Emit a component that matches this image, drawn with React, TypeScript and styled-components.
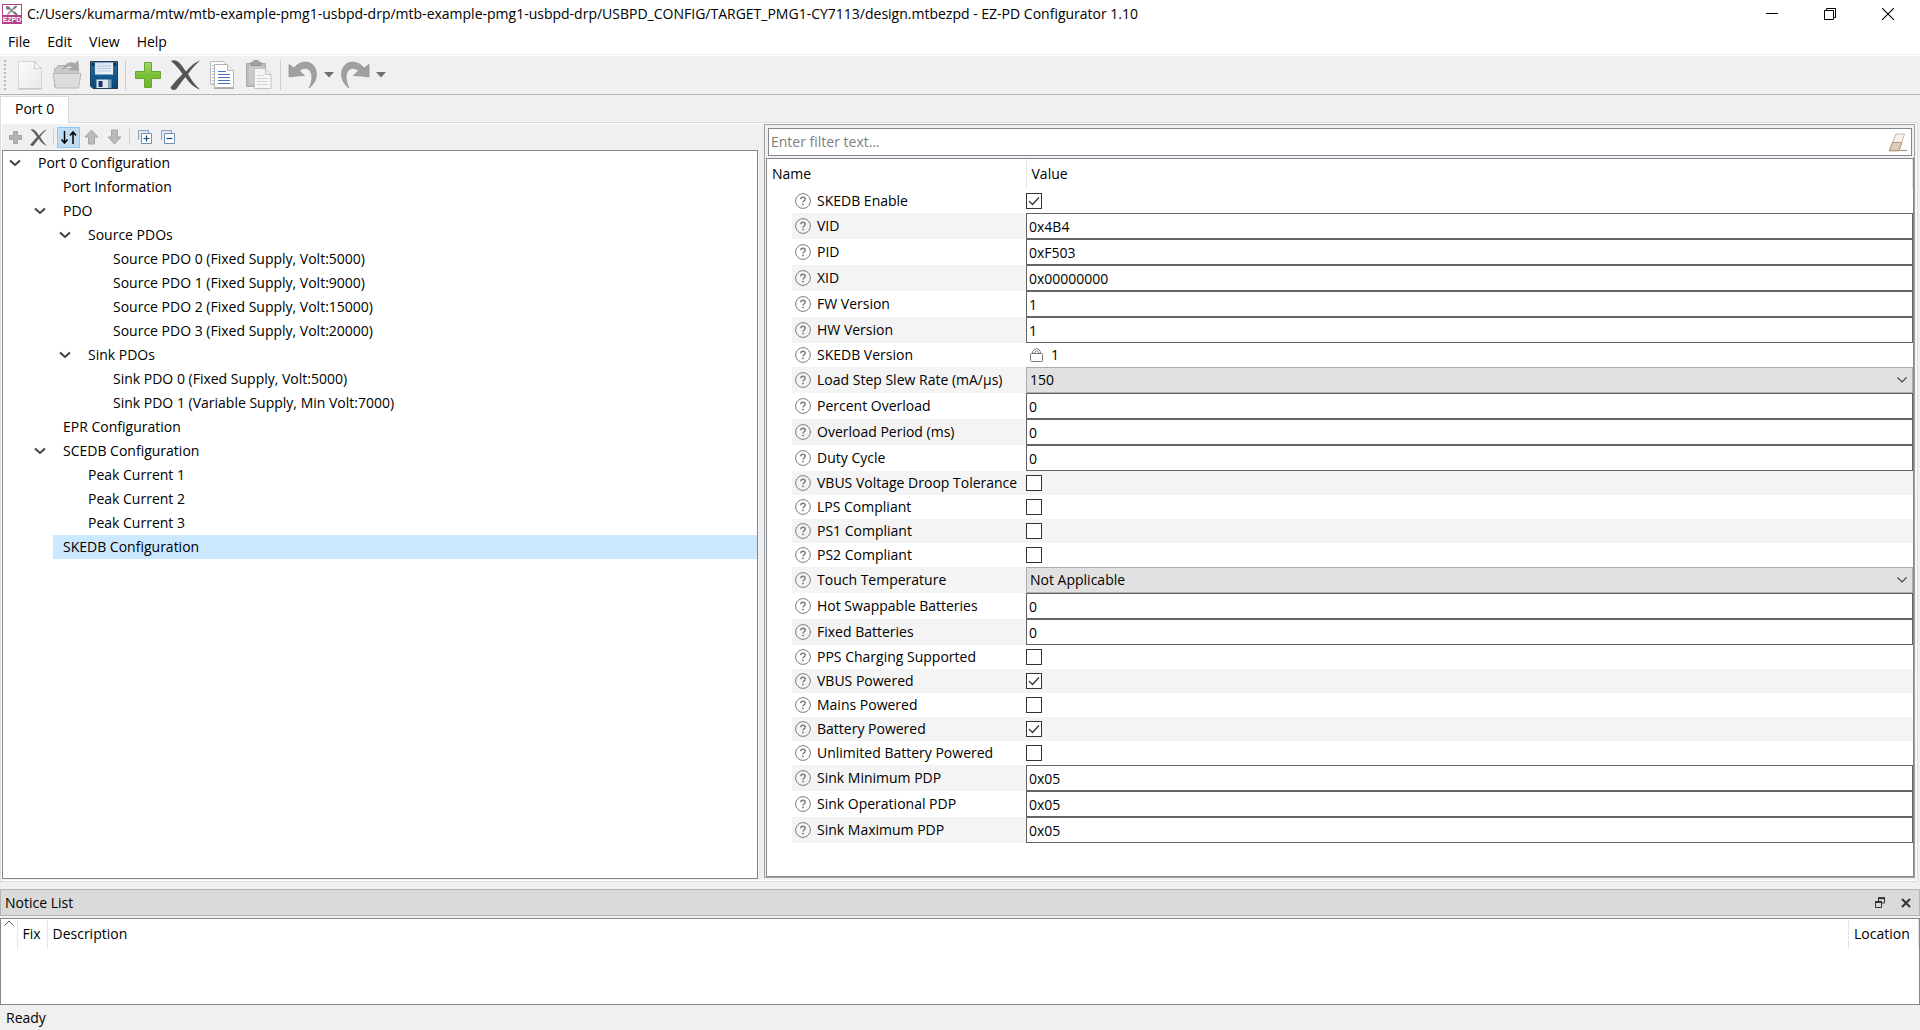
import React, { useState } from "react";
import styled, { createGlobalStyle, css } from "styled-components";

const GlobalStyle = createGlobalStyle`
  *, *::before, *::after { box-sizing: border-box; }
  body { margin: 0; background: #f0f0f0; }
  body, button, input, select {
    font-family: "Open Sans", "Noto Sans", "Liberation Sans", sans-serif;
    font-size: 14px;
    line-height: 20px;
    color: #000;
  }
  button { background: none; border: 0; padding: 0; }
  ul { list-style: none; margin: 0; padding: 0; }
  h1, h2 { font-size: 14px; font-weight: 400; margin: 0; }
`;

const colors = {
  face: "#f0f0f0",
  frame: "#828790",
  light: "#dcdcdc",
  mid: "#b4b4b4",
  field: "#646464",
  stripe: "#f4f4f4",
};

/* ---------- window ---------- */

const Window = styled.div`
  display: flex;
  flex-direction: column;
  min-height: 100vh;
  background: ${colors.face};
`;

const TitleBar = styled.header`
  display: flex;
  align-items: center;
  height: 28px;
  padding-left: 2px;
  background: #fff;
`;

const Title = styled.h1`
  flex: 1;
  margin-left: 5px;
  white-space: nowrap;
`;

const WindowButton = styled.button`
  display: flex;
  align-items: center;
  justify-content: center;
  width: 58px;
  height: 28px;
`;

const WindowButtons = styled.div`
  display: flex;
  padding-right: 3px;
`;

const MenuBar = styled.nav`
  display: flex;
  height: 28px;
  background: #fff;
  border-bottom: 1px solid #fff;
  box-shadow: inset 0 -1px 0 ${colors.face};
  padding-left: 8px;
  gap: 17px;
`;

const MenuButton = styled.button`
  height: 28px;
`;

/* ---------- tool bars ---------- */

const ToolBar = styled.div`
  display: flex;
  align-items: center;
  height: 39px;
  border-bottom: 1px solid ${colors.mid};
`;

const Grip = styled.span`
  width: 2px;
  height: 30px;
  margin: 0 5px 0 4px;
  background: repeating-linear-gradient(#b8b8b8 0 2px, transparent 2px 4px);
`;

const ToolButton = styled.button<{ $width?: number }>`
  display: flex;
  align-items: center;
  justify-content: center;
  width: ${(p) => p.$width ?? 37}px;
  height: 36px;
`;

const Divider = styled.span<{ $height: number }>`
  width: 1px;
  height: ${(p) => p.$height}px;
  margin: 0 3px;
  background: #cfcfcf;
`;

const PaneTools = styled.div`
  display: flex;
  align-items: center;
  height: 26px;
  padding-left: 2px;
`;

const PaneButton = styled.button<{ $on?: boolean }>`
  display: flex;
  align-items: center;
  justify-content: center;
  width: 23px;
  height: 21px;
  ${(p) =>
    p.$on &&
    css`
      background: #c0dcf3;
      border: 1px solid #90c8f6;
    `}
`;

/* ---------- tabs and panes ---------- */

const TabStrip = styled.div`
  display: flex;
  align-items: flex-end;
  height: 27px;
`;

const Tab = styled.button`
  height: 27px;
  margin-bottom: -1px;
  padding: 0 14px 2px;
  background: #fff;
  border: 1px solid ${colors.light};
  border-bottom: 0;
  z-index: 1;
`;

const TabPage = styled.main`
  flex: 1;
  display: grid;
  grid-template-columns: 757fr 1151fr;
  gap: 6px;
  margin-right: 2px;
  padding: 0 2px 0 0;
  border: 1px solid ${colors.light};
  outline: 1px solid #fff;
  outline-offset: -2px;
`;

const LeftPane = styled.section`
  display: flex;
  flex-direction: column;
  padding: 1px 0 2px 1px;
`;

const Tree = styled.ul`
  flex: 1;
  background: #fff;
  border: 1px solid ${colors.frame};
`;

const TreeRow = styled.li<{ $depth: number }>`
  display: flex;
  height: 24px;
  padding-left: ${(p) => p.$depth * 25}px;
`;

const TreeToggle = styled.button`
  display: flex;
  align-items: center;
  justify-content: center;
  width: 25px;
  padding-right: 2px;
`;

const TreeIndent = styled.span`
  width: 25px;
`;

const TreeLabel = styled.button<{ $selected: boolean }>`
  flex: 1;
  padding: 0 10px;
  text-align: left;
  background: ${(p) => (p.$selected ? "#cce8ff" : "transparent")};
`;

const RightPane = styled.section`
  display: flex;
  flex-direction: column;
  margin: 1px 0 3px;
  padding: 3px 0 0 1px;
  border: 1px solid #a0a0a0;
`;

const FilterBox = styled.div`
  display: flex;
  align-items: center;
  height: 28px;
  margin: 0 2px 2px;
  background: #fff;
  border: 1px solid ${colors.frame};
`;

const FilterInput = styled.input`
  flex: 1;
  border: 0;
  padding: 0 2px;
  background: transparent;
  outline: 0;
  &::placeholder {
    color: #808080;
    opacity: 1;
  }
`;

const ClearButton = styled.button`
  display: flex;
  width: 28px;
  justify-content: center;
`;

const Sheet = styled.div`
  flex: 1;
  background: #fff;
  border: 1px solid ${colors.frame};
`;

/* ---------- parameter table ---------- */

const Params = styled.table`
  width: 100%;
  table-layout: fixed;
  border-collapse: collapse;
`;

const HeadCell = styled.th`
  height: 30px;
  padding: 0 5px;
  font-weight: 400;
  text-align: left;
  border-right: 1px solid #e5e5e5;
`;

const ParamRow = styled.tr<{ $tall: boolean }>`
  height: ${(p) => (p.$tall ? 26 : 24)}px;
  &:nth-child(even) > :not(:first-child) {
    background: ${colors.stripe};
  }
`;

const Cell = styled.td`
  padding: 0;
`;

const NameCell = styled.th`
  padding: 0;
  font-weight: 400;
  text-align: left;
`;

const NameLabel = styled.label`
  display: flex;
  align-items: center;
  gap: 6px;
  padding-left: 3px;
  white-space: nowrap;
  > svg {
    flex: none;
  }
`;

const TextField = styled.input`
  display: block;
  width: 100%;
  height: 26px;
  padding: 0 2px;
  border: 1px solid ${colors.field};
  border-radius: 0;
  background: #fff;
`;

const Overlay = styled.span`
  display: grid;
  align-items: center;
  > * {
    grid-area: 1 / 1;
  }
  > svg {
    pointer-events: none;
  }
`;

const SelectField = styled.select`
  appearance: none;
  width: 100%;
  height: 26px;
  padding: 0 3px;
  border: 1px solid #adadad;
  border-radius: 0;
  background: #e1e1e1;
`;

const SelectArrow = styled.svg`
  justify-self: end;
  margin-right: 6px;
`;

const CheckField = styled.input`
  appearance: none;
  width: 16px;
  height: 16px;
  margin: 0;
  border: 1px solid #333;
  background: #fff;
  & + svg {
    visibility: hidden;
  }
  &:checked + svg {
    visibility: visible;
  }
`;

const LockedValue = styled.output`
  display: flex;
  align-items: center;
  gap: 8px;
  padding-left: 4px;
`;

/* ---------- notices ---------- */

const NoticeTitle = styled.div`
  display: flex;
  align-items: center;
  height: 27px;
  margin: 7px 0 2px;
  padding: 0 0 0 4px;
  background: #dadada;
  border: 1px solid ${colors.mid};
  h2 {
    flex: 1;
  }
`;

const DockButton = styled.button`
  display: flex;
  align-items: center;
  justify-content: center;
  width: 26px;
  height: 20px;
`;

const NoticeBox = styled.div`
  height: 87px;
  background: #fff;
  border: 1px solid ${colors.frame};
`;

const NoticeTable = styled.table`
  width: 100%;
  table-layout: fixed;
  border-collapse: collapse;
`;

const SortCell = styled(HeadCell)`
  padding: 1px 0 0 3px;
  vertical-align: top;
  line-height: 0;
`;

const StatusBar = styled.footer`
  height: 25px;
  padding: 3px 6px 2px;
`;

/* ---------- icons ---------- */

const AppIcon = () => (
  <svg width="20" height="20" viewBox="0 0 20 20">
    <rect x="0.5" y="0.5" width="19" height="19" fill="#fff" stroke="#b5408c" />
    <rect x="1" y="11" width="18" height="8" fill="#b5408c" />
    <path d="M6 2.5l7 7.5M13.5 2.5l-8 8" stroke="#8a8a8a" strokeWidth="1.6" />
    <path d="M5 2v2.5h3M12 4.500l2.500-2.500M12 8l3 3" stroke="#777" strokeWidth="1.800" fill="none" />
    <text x="10" y="18" fontSize="7" fontWeight="700" fill="#fff" textAnchor="middle" fontFamily="Liberation Sans, sans-serif">
      EZPD
    </text>
  </svg>
);

const MinimizeIcon = () => (
  <svg width="12" height="12" viewBox="0 0 12 12"><path d="M0 5.5h12" stroke="#000" /></svg>
);
const RestoreIcon = () => (
  <svg width="12" height="12" viewBox="0 0 12 12" fill="none" stroke="#000">
    <path d="M.5 2.500h9v9h-9zM2.500 2.500v-2h9v9h-2" />
  </svg>
);
const CloseIcon = () => (
  <svg width="12" height="12" viewBox="0 0 12 12"><path d="M0 0l12 12M12 0L0 12" stroke="#000" strokeWidth="1.100" /></svg>
);

const NewIcon = () => (
  <svg width="26" height="30" viewBox="0 0 26 30">
    <defs>
      <linearGradient id="paper" x1="0" y1="0" x2="1" y2="1"><stop offset="0" stopColor="#fcfcfc" /><stop offset="1" stopColor="#e9e9e9" /></linearGradient>
    </defs>
    <path d="M1.500 1.500h16l7 7v20h-23z" fill="url(#paper)" stroke="#d6d6d6" />
    <path d="M17.500 1.500c1 2 .5 5-.5 7.500 3-1 5.500-1 7.500-.5z" fill="#fafafa" stroke="#c8c8c8" />
    <path d="M1 29h24" stroke="#bbb" />
  </svg>
);
const OpenIcon = () => (
  <svg width="30" height="30" viewBox="0 0 30 30">
    <path d="M2.500 27V8.500h2l1.500-3h7l1.500 3h12V15" fill="#c9c9c9" stroke="#b0b0b0" />
    <path d="M1 13.500h28l-2.500 14.500h-23z" fill="#dcdcdc" stroke="#b8b8b8" />
    <path d="M11 9.500c1-5 6-8.500 12-6l3-2.500.5 9h-9l3-3c-4-1.500-7-.5-9.500 2.500z" fill="#a9a9a9" stroke="#999" strokeWidth=".6" />
  </svg>
);
const SaveIcon = () => (
  <svg width="28" height="28" viewBox="0 0 28 28">
    <defs>
      <linearGradient id="disk" x1="0" y1="0" x2="0" y2="1"><stop offset="0" stopColor="#3a6d93" /><stop offset=".5" stopColor="#155a90" /><stop offset="1" stopColor="#0d4573" /></linearGradient>
      <linearGradient id="plate" x1="0" y1="0" x2="1" y2="1"><stop offset="0" stopColor="#cddff0" /><stop offset="1" stopColor="#f3f7fa" /></linearGradient>
    </defs>
    <path d="M.5.5h27v27H3L.5 25z" fill="url(#disk)" stroke="#1d3e5a" />
    <path d="M5 1.500h18v12H5z" fill="url(#plate)" />
    <path d="M7 5h14M7 7.500h14M7 10h14" stroke="#b9cad9" />
    <path d="M2 2h2v3H2zM24 2h2v3h-2z" fill="#0b2c49" />
    <path d="M6.500 18.500h12V27h-12z" fill="#e4e8ec" />
    <path d="M8.500 20h4v6h-4z" fill="#1c2f6d" />
    <path d="M18.500 18.500h3V27h-3z" fill="#7fa3c0" />
  </svg>
);
const PlusIcon = () => (
  <svg width="28" height="28" viewBox="0 0 28 28">
    <defs>
      <linearGradient id="green" x1="0" y1="0" x2="0" y2="1"><stop offset="0" stopColor="#a5d66a" /><stop offset=".5" stopColor="#7cc035" /><stop offset="1" stopColor="#6fb62c" /></linearGradient>
    </defs>
    <path d="M10.500 1.500h7v9h9v7h-9v9h-7v-9h-9v-7h9z" fill="url(#green)" stroke="#65a82f" strokeLinejoin="round" />
  </svg>
);
const Cross = ({ size, color }: { size: number; color: string }) => (
  <svg width={size} height={size} viewBox="0 0 30 30">
    <path d="M1 1C4-.5 7 .5 9.500 3c3 3 4.500 6 6.500 8.500C19.500 7.500 23.500 3 30 .5c-4 4-8.500 8-12 13.500C21 19.500 25 25 30 29.500c-6-2-11-6.500-14.500-12.500C12 21 9 25.500 6 29.500c-2 1-5 .5-5.500-2C4 23 8.500 18 12.500 14 9.500 9.500 5.500 4.500 1 1z" fill={color} />
  </svg>
);
const CopyIcon = () => (
  <svg width="26" height="30" viewBox="0 0 26 30">
    <path d="M1.500 1.500h13l4 4v19h-17z" fill="#fafafa" stroke="#bcbcbc" />
    <path d="M4 5v19" stroke="#5f7fd0" strokeDasharray="1 2" />
    <path d="M5.500 4.500h13l6 6v17h-19z" fill="#fff" stroke="#b4b4b4" />
    <path d="M18.500 4.500v6h6" fill="#f2f2f2" stroke="#b4b4b4" />
    <path d="M5 28.500h20" stroke="#a8a8a8" />
    <path d="M9 11.500h8M9 14.500h12M9 17.500h12M9 20.500h12M9 23.500h12" stroke="#4a6fd0" />
  </svg>
);
const PasteIcon = () => (
  <svg width="28" height="30" viewBox="0 0 28 30">
    <path d="M1.500 3.500h19v23h-19z" fill="#bdbdbd" stroke="#a9a9a9" />
    <path d="M4 6h14v18H4z" fill="#c9c9c9" />
    <path d="M6 5.500V2.500h2.500V.8h5v1.700H16v3z" fill="#a4a4a4" stroke="#8f8f8f" />
    <path d="M9.500 8.500h11l5.500 6v14H9.500z" fill="#f6f6f6" stroke="#c2c2c2" />
    <path d="M20.500 8.500v6H26" fill="#e9e9e9" stroke="#c2c2c2" />
    <path d="M12 15.500h7M12 18.500h11M12 21.500h11M12 24.500h11" stroke="#d6d6d6" />
  </svg>
);
const UndoIcon = ({ flip }: { flip?: boolean }) => (
  <svg width="30" height="28" viewBox="0 0 30 28">
    <path
      transform={flip ? "translate(30 0) scale(-1 1)" : undefined}
      d="M1 3.500l5 3.500C12-.5 22-1 26.500 6c4 7 1.500 16-5.500 21 3-6 4-12 1.500-16.500-2.500-4-7.500-4.500-11-.5l5 4.500c-5 .5-10.500.5-15.500 1.500z"
      fill="#a0a0a0"
      stroke="#8e8e8e"
      strokeWidth=".7"
    />
  </svg>
);
const CaretIcon = () => (
  <svg width="10" height="6" viewBox="0 0 10 6"><path d="M0 0h10L5 5.500z" fill="#707070" /></svg>
);
const SmallPlusIcon = () => (
  <svg width="15" height="15" viewBox="0 0 15 15">
    <path d="M5.500 1.500h4v4h4v4h-4v4h-4v-4h-4v-4h4z" fill="#b4b4b4" stroke="#a4a4a4" />
  </svg>
);
const SortArrowsIcon = () => (
  <svg width="17" height="15" viewBox="0 0 17 15" fill="none" stroke="#000" strokeWidth="1.500">
    <path d="M4.500 1v12M1.500 9.500l3 3.500 3-3.500M13 14V2M10 5.500L13 2l3 3.500" />
  </svg>
);
const BlockArrowIcon = ({ down }: { down?: boolean }) => (
  <svg width="15" height="16" viewBox="0 0 15 16">
    <path
      transform={down ? "translate(0 16) scale(1 -1)" : undefined}
      d="M7.500 1L14 8h-3.500v7h-6V8H1z"
      fill="#b9b9b9"
      stroke="#a6a6a6"
    />
  </svg>
);
const BoxesIcon = ({ plus }: { plus?: boolean }) => (
  <svg width="14" height="14" viewBox="0 0 14 14" fill="none">
    <path d="M.5 10V.5h10V3" stroke="#8aa3c0" fill="#dfe9f3" />
    <path d="M3.500 3.500h10v10h-10z" fill="#fff" stroke="#6f8fb3" />
    <path d={plus ? "M5.500 8.500h6M8.500 5.500v6" : "M5.500 8.500h6"} stroke="#154a80" strokeWidth="1.200" />
  </svg>
);
const TreeChevron = () => (
  <svg width="12" height="8" viewBox="0 0 12 8"><path d="M1 1.500l5 4.500 5-4.500" fill="none" stroke="#404040" strokeWidth="2" /></svg>
);
const HelpIcon = () => (
  <svg width="16" height="16" viewBox="0 0 16 16" fill="none" stroke="#7c7c7c">
    <circle cx="8" cy="8" r="7.400" />
    <path d="M5.800 6.200C5.800 3.600 10.200 3.600 10.200 6.200 10.200 7.700 8 7.800 8 9.600" strokeWidth="1.500" />
    <path d="M8 10.700v1.600" strokeWidth="1.700" />
  </svg>
);
const CheckIcon = () => (
  <svg width="16" height="16" viewBox="0 0 16 16"><path d="M3 8l3.500 3.500L13 4.500" fill="none" stroke="#333" strokeWidth="1.300" /></svg>
);
const LockIcon = () => (
  <svg width="13" height="14" viewBox="0 0 13 14" fill="none" stroke="#777">
    <rect x=".5" y="5.500" width="12" height="8" rx="1" />
    <path d="M2.500 5.500C2.500-.8 10.500-.8 10.500 5.500M4.500 5.500c0-3.500 4-3.500 4 0" />
  </svg>
);
const EraserIcon = () => (
  <svg width="19" height="19" viewBox="0 0 19 19">
    <path d="M8 1h8.500l-5.500 17H1z" fill="#f7f2ee" stroke="#c9b8a8" strokeLinejoin="round" />
    <path d="M4.800 9.500h9L11 17.500H1.500z" fill="#decbb9" stroke="#b09a85" strokeLinejoin="round" />
    <path d="M12 17.500h7" stroke="#b09a85" strokeWidth="1.200" />
  </svg>
);
const FloatIcon = () => (
  <svg width="10" height="11" viewBox="0 0 10 11" fill="none" stroke="#333">
    <path d="M3.500 4V1h6v5H7" /><path d="M3 1.200h7" strokeWidth="2" />
    <path d="M.5 5h6v5.500h-6z" /><path d="M0 5h7" strokeWidth="2" />
  </svg>
);
const DockCloseIcon = () => (
  <svg width="10" height="10" viewBox="0 0 10 10"><path d="M1 1l8 8M9 1L1 9" stroke="#333" strokeWidth="2" /></svg>
);

/* ---------- data ---------- */

type Node = { label: string; depth: number; open?: boolean };

const nodes: Node[] = [
  { label: "Port 0 Configuration", depth: 0, open: true },
  { label: "Port Information", depth: 1 },
  { label: "PDO", depth: 1, open: true },
  { label: "Source PDOs", depth: 2, open: true },
  { label: "Source PDO 0 (Fixed Supply, Volt:5000)", depth: 3 },
  { label: "Source PDO 1 (Fixed Supply, Volt:9000)", depth: 3 },
  { label: "Source PDO 2 (Fixed Supply, Volt:15000)", depth: 3 },
  { label: "Source PDO 3 (Fixed Supply, Volt:20000)", depth: 3 },
  { label: "Sink PDOs", depth: 2, open: true },
  { label: "Sink PDO 0 (Fixed Supply, Volt:5000)", depth: 3 },
  { label: "Sink PDO 1 (Variable Supply, Min Volt:7000)", depth: 3 },
  { label: "EPR Configuration", depth: 1 },
  { label: "SCEDB Configuration", depth: 1, open: true },
  { label: "Peak Current 1", depth: 2 },
  { label: "Peak Current 2", depth: 2 },
  { label: "Peak Current 3", depth: 2 },
  { label: "SKEDB Configuration", depth: 1 },
];

type Param = { name: string; kind: "text" | "check" | "select" | "locked"; value: string | boolean };

const text = (name: string, value: string): Param => ({ name, kind: "text", value });
const check = (name: string, value: boolean): Param => ({ name, kind: "check", value });
const select = (name: string, value: string): Param => ({ name, kind: "select", value });

const params: Param[] = [
  check("SKEDB Enable", true),
  text("VID", "0x4B4"),
  text("PID", "0xF503"),
  text("XID", "0x00000000"),
  text("FW Version", "1"),
  text("HW Version", "1"),
  { name: "SKEDB Version", kind: "locked", value: "1" },
  select("Load Step Slew Rate (mA/µs)", "150"),
  text("Percent Overload", "0"),
  text("Overload Period (ms)", "0"),
  text("Duty Cycle", "0"),
  check("VBUS Voltage Droop Tolerance", false),
  check("LPS Compliant", false),
  check("PS1 Compliant", false),
  check("PS2 Compliant", false),
  select("Touch Temperature", "Not Applicable"),
  text("Hot Swappable Batteries", "0"),
  text("Fixed Batteries", "0"),
  check("PPS Charging Supported", false),
  check("VBUS Powered", true),
  check("Mains Powered", false),
  check("Battery Powered", true),
  check("Unlimited Battery Powered", false),
  text("Sink Minimum PDP", "0x05"),
  text("Sink Operational PDP", "0x05"),
  text("Sink Maximum PDP", "0x05"),
];

/* ---------- parts ---------- */

function ParamEditor({ id, param }: { id: string; param: Param }) {
  switch (param.kind) {
    case "text":
      return <TextField id={id} type="text" defaultValue={String(param.value)} />;
    case "select":
      return (
        <Overlay>
          <SelectField id={id} defaultValue={String(param.value)}>
            <option>{param.value}</option>
          </SelectField>
          <SelectArrow width="10" height="6" viewBox="0 0 10 6">
            <path d="M.5.5L5 5 9.500.5" fill="none" stroke="#444" strokeWidth="1.200" />
          </SelectArrow>
        </Overlay>
      );
    case "check":
      return (
        <Overlay>
          <CheckField id={id} type="checkbox" defaultChecked={Boolean(param.value)} />
          <CheckIcon />
        </Overlay>
      );
    default:
      return (
        <LockedValue id={id}>
          <LockIcon />
          {param.value}
        </LockedValue>
      );
  }
}

function ConfigTree() {
  const [selected, setSelected] = useState(nodes.length - 1);
  const [closed, setClosed] = useState<number[]>([]);
  let hiddenBelow = Infinity;

  return (
    <Tree>
      {nodes.map((node, i) => {
        if (node.depth > hiddenBelow) return null;
        hiddenBelow = closed.includes(i) ? node.depth : Infinity;
        return (
          <TreeRow key={i} $depth={node.depth}>
            {node.open ? (
              <TreeToggle
                aria-label={`Toggle ${node.label}`}
                onClick={() => setClosed(closed.includes(i) ? closed.filter((n) => n !== i) : [...closed, i])}
              >
                <TreeChevron />
              </TreeToggle>
            ) : (
              <TreeIndent />
            )}
            <TreeLabel $selected={selected === i} onClick={() => setSelected(i)}>
              {node.label}
            </TreeLabel>
          </TreeRow>
        );
      })}
    </Tree>
  );
}

export default function App() {
  return (
    <Window>
      <GlobalStyle />
      <TitleBar>
        <AppIcon />
        <Title>
          C:/Users/kumarma/mtw/mtb-example-pmg1-usbpd-drp/mtb-example-pmg1-usbpd-drp/USBPD_CONFIG/TARGET_PMG1-CY7113/design.mtbezpd - EZ-PD Configurator 1.10
        </Title>
        <WindowButtons>
          <WindowButton aria-label="Minimize"><MinimizeIcon /></WindowButton>
          <WindowButton aria-label="Restore"><RestoreIcon /></WindowButton>
          <WindowButton aria-label="Close"><CloseIcon /></WindowButton>
        </WindowButtons>
      </TitleBar>
      <MenuBar>
        {["File", "Edit", "View", "Help"].map((m) => (
          <MenuButton key={m}>{m}</MenuButton>
        ))}
      </MenuBar>
      <ToolBar>
        <Grip />
        <ToolButton aria-label="New"><NewIcon /></ToolButton>
        <ToolButton aria-label="Open"><OpenIcon /></ToolButton>
        <ToolButton aria-label="Save"><SaveIcon /></ToolButton>
        <Divider $height={30} />
        <ToolButton aria-label="Add"><PlusIcon /></ToolButton>
        <ToolButton aria-label="Delete"><Cross size={30} color="#555" /></ToolButton>
        <ToolButton aria-label="Copy"><CopyIcon /></ToolButton>
        <ToolButton aria-label="Paste"><PasteIcon /></ToolButton>
        <Divider $height={30} />
        <ToolButton aria-label="Undo"><UndoIcon /></ToolButton>
        <ToolButton $width={15} aria-label="Undo history"><CaretIcon /></ToolButton>
        <ToolButton aria-label="Redo"><UndoIcon flip /></ToolButton>
        <ToolButton $width={15} aria-label="Redo history"><CaretIcon /></ToolButton>
      </ToolBar>
      <TabStrip>
        <Tab>Port 0</Tab>
      </TabStrip>
      <TabPage>
        <LeftPane>
          <PaneTools>
            <PaneButton aria-label="Add item"><SmallPlusIcon /></PaneButton>
            <PaneButton aria-label="Remove item"><Cross size={17} color="#606060" /></PaneButton>
            <Divider $height={16} />
            <PaneButton $on aria-label="Reorder"><SortArrowsIcon /></PaneButton>
            <PaneButton aria-label="Move up"><BlockArrowIcon /></PaneButton>
            <PaneButton aria-label="Move down"><BlockArrowIcon down /></PaneButton>
            <Divider $height={16} />
            <PaneButton aria-label="Expand all"><BoxesIcon plus /></PaneButton>
            <PaneButton aria-label="Collapse all"><BoxesIcon /></PaneButton>
          </PaneTools>
          <ConfigTree />
        </LeftPane>
        <RightPane>
          <FilterBox>
            <FilterInput type="text" aria-label="Filter" placeholder="Enter filter text..." />
            <ClearButton aria-label="Clear filter"><EraserIcon /></ClearButton>
          </FilterBox>
          <Sheet>
            <Params>
              <colgroup>
                <col style={{ width: 25 }} />
                <col style={{ width: 234 }} />
                <col />
              </colgroup>
              <thead>
                <tr>
                  <HeadCell colSpan={2}>Name</HeadCell>
                  <HeadCell>Value</HeadCell>
                </tr>
              </thead>
              <tbody>
                {params.map((param, i) => (
                  <ParamRow key={param.name} $tall={param.kind === "text" || param.kind === "select"}>
                    <Cell />
                    <NameCell scope="row">
                      <NameLabel htmlFor={`param-${i}`}>
                        <HelpIcon />
                        {param.name}
                      </NameLabel>
                    </NameCell>
                    <Cell>
                      <ParamEditor id={`param-${i}`} param={param} />
                    </Cell>
                  </ParamRow>
                ))}
              </tbody>
            </Params>
          </Sheet>
        </RightPane>
      </TabPage>
      <NoticeTitle>
        <h2>Notice List</h2>
        <DockButton aria-label="Float"><FloatIcon /></DockButton>
        <DockButton aria-label="Close notices"><DockCloseIcon /></DockButton>
      </NoticeTitle>
      <NoticeBox>
        <NoticeTable>
          <colgroup>
            <col style={{ width: 16 }} />
            <col style={{ width: 30 }} />
            <col />
            <col style={{ width: 70 }} />
          </colgroup>
          <thead>
            <tr>
              <SortCell aria-label="Severity">
                <svg width="10" height="6" viewBox="0 0 10 6">
                  <path d="M.5 5.500L5 1l4.500 4.500" fill="none" stroke="#555" />
                </svg>
              </SortCell>
              <HeadCell>Fix</HeadCell>
              <HeadCell>Description</HeadCell>
              <HeadCell>Location</HeadCell>
            </tr>
          </thead>
        </NoticeTable>
      </NoticeBox>
      <StatusBar>Ready</StatusBar>
    </Window>
  );
}
